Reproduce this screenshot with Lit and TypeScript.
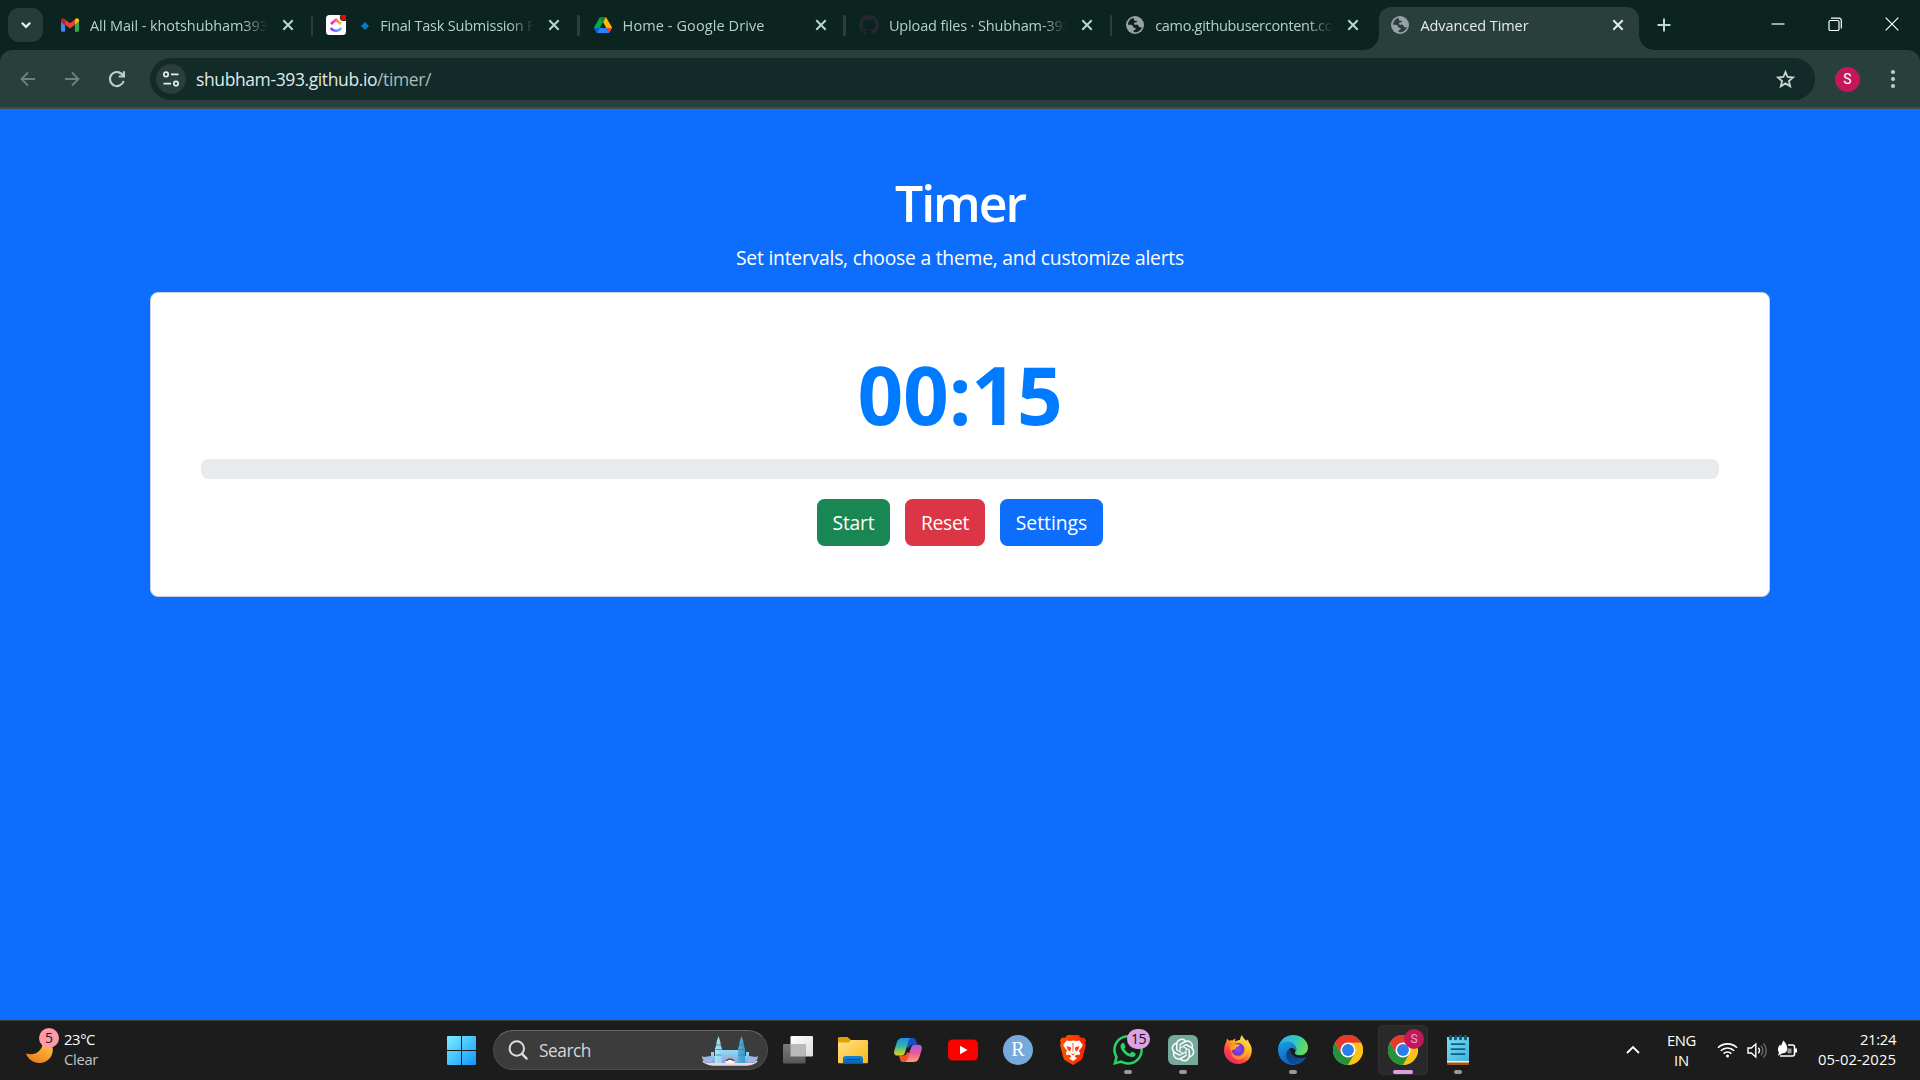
import { LitElement, html, svg, css, nothing, type TemplateResult } from "lit";
import { customElement, property } from "lit/decorators.js";

/** A line of text whose tracking is computed so that it fills a given width. */
@customElement("fit-text")
class FitText extends LitElement {
  @property({ type: Number }) width = 0;

  static styles = css`
    :host { display: inline-block; white-space: nowrap; }
  `;

  firstUpdated() {
    const count = [...(this.textContent ?? "").trim()].length;
    if (!this.width || !count) return;
    const natural = this.getBoundingClientRect().width;
    this.style.letterSpacing = `${((this.width - natural) / count).toFixed(4)}px`;
  }

  render() {
    return html`<slot></slot>`;
  }
}

const globe = svg`
  <svg class="icon18" viewBox="0 0 18 18">
    <circle cx="9" cy="9" r="9" fill="#9aa0a6"/>
    <path class="land" d="M7.6 1.9C4.4 2.5 2 5.4 2 8.7c1.6.1 3.6-.1 4.6.9.6.6.1 1.5 1.1 1.9 1.2.3 2.1.3 2.1 1.500 0 1.100-1.900.6-2.200 1.900l-.1 1.100c3.600.8 7.500-1.400 8.400-5.100-1.200.4-2.300.5-3-.2-.7-.6-.3-1.600-1.100-1.900-1.200-.4-2.800.4-3.600-.6-.5-.7-.1-1.500.600-1.800.8-.3 1.700.1 2.100-.5.4-.6-.3-1.100-.9-1.100-.9-.1-1.700-.1-2-.9-.2-.6-.4-1.400-.4-2z"/>
  </svg>`;

const gmail = svg`
  <svg class="icon18" viewBox="52 31 88 88">
    <path fill="#4285f4" d="M58 108h14V74L52 59v43c0 3.320 2.690 6 6 6"/>
    <path fill="#34a853" d="M120 108h14c3.320 0 6-2.690 6-6V59l-20 15"/>
    <path fill="#fbbc04" d="M120 48v26l20-15v-8c0-7.420-8.470-11.650-14.400-7.200"/>
    <path fill="#ea4335" d="M72 74V48l24 18 24-18v26L96 92"/>
    <path fill="#c5221f" d="M52 51v8l20 15V48l-5.600-4.200c-5.940-4.450-14.400-.22-14.400 7.200"/>
  </svg>`;

const clickup = svg`
  <svg class="icon20" viewBox="0 0 20 20">
    <defs>
      <linearGradient id="cu-top"><stop stop-color="#ff02f0"/><stop offset="1" stop-color="#ffc800"/></linearGradient>
      <linearGradient id="cu-low"><stop stop-color="#8930fd"/><stop offset="1" stop-color="#49ccf9"/></linearGradient>
    </defs>
    <rect width="20" height="20" rx="3.500" fill="#fff"/>
    <path d="M5 9l5-4.300L15 9" fill="none" stroke="url(#cu-top)" stroke-width="2.600"/>
    <path d="M4.800 13c2.900 3.700 7.600 3.700 10.400 0" fill="none" stroke="url(#cu-low)" stroke-width="2.600"/>
    <circle cx="17.500" cy="2.500" r="3.600" fill="#0b2420"/>
    <circle cx="17.500" cy="2.500" r="2.900" fill="#f00"/>
  </svg>`;

const drive = svg`
  <svg class="icon18" viewBox="0 -4.600 87.300 87.300">
    <path fill="#0066da" d="M6.600 66.850l3.850 6.650c.8 1.400 1.950 2.500 3.300 3.300l13.750-23.800H0c0 1.550.4 3.100 1.200 4.500z"/>
    <path fill="#00ac47" d="M43.650 25L29.900 1.200c-1.350.8-2.500 1.900-3.300 3.300l-25.400 44A9.060 9.060 0 0 0 0 53h27.500z"/>
    <path fill="#ea4335" d="M73.550 76.800c1.350-.8 2.500-1.900 3.300-3.300l1.600-2.750 7.650-13.250c.8-1.400 1.200-2.950 1.200-4.500H59.798l5.852 11.500z"/>
    <path fill="#188038" d="M43.650 25L57.400 1.200C56.050.4 54.500 0 52.900 0H34.400c-1.600 0-3.150.45-4.500 1.200z"/>
    <path fill="#2684fc" d="M59.800 53H27.500L13.750 76.800c1.350.8 2.900 1.200 4.500 1.200h50.800c1.600 0 3.150-.45 4.500-1.200z"/>
    <path fill="#ffba00" d="M73.400 26.500l-12.700-22c-.8-1.400-1.950-2.500-3.300-3.300L43.650 25 59.800 53h27.450c0-1.550-.4-3.100-1.200-4.500z"/>
  </svg>`;

const github = svg`
  <svg class="icon20" viewBox="0 0 16 16">
    <path fill="#24292f" d="M8 0C3.58 0 0 3.58 0 8c0 3.54 2.29 6.53 5.47 7.59.4.07.55-.17.55-.38 0-.19-.01-.82-.01-1.49-2.01.37-2.53-.49-2.69-.94-.09-.23-.48-.94-.82-1.13-.28-.15-.68-.52-.01-.53.63-.01 1.08.58 1.23.82.72 1.21 1.87.87 2.33.66.07-.52.28-.87.51-1.07-1.78-.2-3.64-.89-3.64-3.95 0-.87.31-1.59.82-2.15-.08-.2-.36-1.02.08-2.12 0 0 .67-.21 2.2.82.64-.18 1.32-.27 2-.27.68 0 1.36.09 2 .27 1.53-1.04 2.2-.82 2.2-.82.44 1.1.16 1.92.08 2.12.51.56.82 1.27.82 2.15 0 3.07-1.87 3.75-3.65 3.95.29.25.54.73.54 1.48 0 1.07-.01 1.93-.01 2.2 0 .21.15.46.55.38A8.012 8.012 0 0 0 16 8c0-4.42-3.58-8-8-8z"/>
  </svg>`;

const cross = svg`
  <svg class="cross" viewBox="0 0 12 12"><path d="M1.300 1.300l9.400 9.400M10.700 1.300l-9.400 9.400"/></svg>`;

const chromeLogo = svg`
  <svg class="icon30" viewBox="0 0 48 48">
    <circle cx="24" cy="24" r="24" fill="#fbc116"/>
    <path fill="#e33b2e" d="M24 24L3.200 12A24 24 0 0 1 44.800 12H24z"/>
    <path fill="#22933e" d="M3.200 12A24 24 0 0 0 24 48l10.400-18L24 24 13.600 30z"/>
    <path fill="#fbc116" d="M44.800 12A24 24 0 0 1 24 48l10.400-18A12 12 0 0 0 34.400 18L24 12z"/>
    <path fill="#e33b2e" d="M24 12h20.800A24 24 0 0 0 3.200 12l10.400 18L24 24z"/>
    <circle cx="24" cy="24" r="12" fill="#fff"/>
    <circle cx="24" cy="24" r="9.500" fill="#2b7de9"/>
  </svg>`;

const taskIcons = {
  view: svg`
    <svg class="icon30" viewBox="0 0 30 30">
      <defs>
        <linearGradient id="tv-b" x2="0" y2="1"><stop stop-color="#7b7b7b"/><stop offset="1" stop-color="#575757"/></linearGradient>
        <linearGradient id="tv-f" x2="1" y2="1"><stop stop-color="#fff"/><stop offset="1" stop-color="#dcdcdc"/></linearGradient>
      </defs>
      <rect x="7.500" y="1" width="22.500" height="20.500" rx="1.200" fill="url(#tv-f)"/>
      <rect x="0" y="9" width="22.500" height="19.500" rx="1.200" fill="url(#tv-b)"/>
      <rect x="7.500" y="9" width="15" height="12.500" fill="#b9b9b9"/>
    </svg>`,
  explorer: svg`
    <svg class="icon30" viewBox="0 0 30 30">
      <defs>
        <linearGradient id="ex-f" x2="1" y2="1"><stop stop-color="#ffe08a"/><stop offset="1" stop-color="#fbb917"/></linearGradient>
        <linearGradient id="ex-b" x2="0" y2="1"><stop stop-color="#1086d6"/><stop offset="1" stop-color="#0a62b0"/></linearGradient>
      </defs>
      <path fill="#e0a106" d="M0 3.500C0 2.600.7 2 1.500 2H9.500L13 5h15.500c.8 0 1.500.6 1.500 1.400V12H0z"/>
      <path fill="url(#ex-f)" d="M0 7.500h10.500L13 5h15.500c.8 0 1.500.6 1.500 1.500V27c0 .8-.5 1.300-1.300 1.300H1.300C.5 28.300 0 27.800 0 27z"/>
      <path fill="url(#ex-b)" d="M5 23.500C5 22 6 21 7.500 21h15c1.500 0 2.500 1 2.500 2.500v4.800H5z"/>
      <path d="M9 24.500h12" stroke="#084a88" stroke-width="1.200" stroke-linecap="round"/>
    </svg>`,
  copilot: svg`
    <svg class="icon30" viewBox="0 0 30 30">
      <defs>
        <linearGradient id="cp-a" x2="0" y2="1"><stop stop-color="#1c8fe8"/><stop offset=".45" stop-color="#2fb4b0"/><stop offset=".8" stop-color="#a5cc3c"/><stop offset="1" stop-color="#e8c52e"/></linearGradient>
        <linearGradient id="cp-b" x2="0" y2="1"><stop stop-color="#a25be6"/><stop offset=".5" stop-color="#e85a9e"/><stop offset="1" stop-color="#ffa06a"/></linearGradient>
      </defs>
      <path fill="#1750c8" d="M15.500 3h4.500c1.700 0 2.500 1 3 2.500l1.200 4.200h-4.500c-2 0-3 1-3.600 3L13 12z"/>
      <path fill="#e8562a" d="M14.500 27h-4.600c-1.700 0-2.400-1-2.900-2.500L6 20.500h4.300c2 0 3.100-1 3.700-3l3.200.5z"/>
      <path fill="url(#cp-a)" d="M9.500 3h8.800c-1.600.3-2.300 1.400-2.800 3l-3.500 11.500c-.6 2-1.600 3-3.600 3H4.500C1.700 20.500.5 18.500 1.300 15.500l2.500-8C4.800 4.500 6.500 3 9.500 3z"/>
      <path fill="url(#cp-b)" d="M20.500 27h-8.700c1.500-.3 2.300-1.400 2.700-3L18 12.700c.6-2 1.600-3 3.600-3h3.900c2.800 0 4 2 3.200 5l-2.500 7.800C25.200 25.500 23.500 27 20.500 27z"/>
    </svg>`,
  youtube: svg`
    <svg class="icon30" viewBox="0 0 30 30">
      <rect y="4.500" width="30" height="21" rx="4.500" fill="#f00"/>
      <path fill="#fff" d="M12 10.800v8.400l7.500-4.200z"/>
    </svg>`,
  r: svg`
    <svg class="icon30" viewBox="0 0 30 30">
      <circle cx="15" cy="15" r="15" fill="#75aadb"/>
      <text class="serif" x="15" y="20.500" text-anchor="middle" fill="#fff">R</text>
    </svg>`,
  brave: svg`
    <svg class="icon30" viewBox="0 0 30 30">
      <defs><linearGradient id="br"><stop stop-color="#ff5500"/><stop offset="1" stop-color="#ff2000"/></linearGradient></defs>
      <path fill="url(#br)" d="M9.500 0h11l2.700 2.900 2.600-.4L28 5.300l-.8 2.500.7 2.200-3.200 12.600c-.4 1.400-1 2.200-2.200 3L15 30l-7.500-4.400c-1.200-.8-1.800-1.600-2.200-3L2.100 10l.7-2.200L2 5.300l2.200-2.800 2.600.4z"/>
      <path fill="#fff" d="M15 5.500l3.300.6 3-.6 3.400 4.300-.5 1.700-3.300 4.200 1.200 2.300-.8 2.300-2.400-.9-2 1.500.1 1 2 1.300L15 26l-4-2.800 2-1.300.1-1-2-1.500-2.400.9-.8-2.300 1.200-2.300-3.300-4.200-.5-1.700 3.400-4.300 3 .6z"/>
      <path fill="#ff4010" d="M8.500 11.200l4 .8.700 1.500-1.200 3.200-2.200-2zM21.500 11.200l-4 .8-.7 1.500 1.200 3.200 2.200-2zM12.500 18l2.500 1 2.500-1-2.500 2.400zM14.500 8h1l-.2 9h-.6z"/>
    </svg>`,
  whatsapp: svg`
    <svg class="icon30" viewBox="0 0 24 24">
      <path fill="#25d366" d="M17.472 14.382c-.297-.149-1.758-.867-2.03-.967-.273-.099-.471-.148-.67.15-.197.297-.767.966-.94 1.164-.173.199-.347.223-.644.075-.297-.15-1.255-.463-2.39-1.475-.883-.788-1.48-1.761-1.653-2.059-.173-.297-.018-.458.13-.606.134-.133.298-.347.446-.52.149-.174.198-.298.298-.497.099-.198.05-.371-.025-.52-.075-.149-.669-1.612-.916-2.207-.242-.579-.487-.5-.669-.51-.173-.008-.371-.01-.57-.01-.198 0-.52.074-.792.372-.272.297-1.04 1.016-1.04 2.479 0 1.462 1.065 2.875 1.213 3.074.149.198 2.096 3.2 5.077 4.487.709.306 1.262.489 1.694.625.712.227 1.36.195 1.871.118.571-.085 1.758-.719 2.006-1.413.248-.694.248-1.289.173-1.413-.074-.124-.272-.198-.57-.347m-5.421 7.403h-.004a9.87 9.87 0 01-5.031-1.378l-.361-.214-3.741.982.998-3.648-.235-.374a9.86 9.86 0 01-1.51-5.26c.001-5.45 4.436-9.884 9.888-9.884 2.64 0 5.122 1.03 6.988 2.898a9.825 9.825 0 012.893 6.994c-.003 5.45-4.437 9.884-9.885 9.884m8.413-18.297A11.815 11.815 0 0012.05 0C5.495 0 .16 5.335.157 11.892c0 2.096.547 4.142 1.588 5.945L.057 24l6.305-1.654a11.882 11.882 0 005.683 1.448h.005c6.554 0 11.89-5.335 11.893-11.893a11.821 11.821 0 00-3.48-8.413z"/>
    </svg>`,
  gpt: svg`
    <svg class="icon30" viewBox="0 0 30 30">
      <path fill="#75a99c" d="M6 0h18a6 6 0 0 1 6 6v24H6a6 6 0 0 1-6-6V6a6 6 0 0 1 6-6z"/>
      <g transform="translate(3.500 3.500) scale(.958)"><path fill="#fff" d="M22.2819 9.8211a5.9847 5.9847 0 0 0-.5157-4.9108 6.0462 6.0462 0 0 0-6.5098-2.9A6.0651 6.0651 0 0 0 4.9807 4.1818a5.9847 5.9847 0 0 0-3.9977 2.9 6.0462 6.0462 0 0 0 .7427 7.0966 5.98 5.98 0 0 0 .511 4.9107 6.051 6.051 0 0 0 6.5146 2.9001A5.9847 5.9847 0 0 0 13.2599 24a6.0557 6.0557 0 0 0 5.7718-4.2058 5.9894 5.9894 0 0 0 3.9977-2.9001 6.0557 6.0557 0 0 0-.7475-7.0729zm-9.022 12.6081a4.4755 4.4755 0 0 1-2.8764-1.0408l.1419-.0804 4.7783-2.7582a.7948.7948 0 0 0 .3927-.6813v-6.7369l2.02 1.1686a.071.071 0 0 1 .038.052v5.5826a4.504 4.504 0 0 1-4.4945 4.4944zm-9.6607-4.1254a4.4708 4.4708 0 0 1-.5346-3.0137l.142.0852 4.783 2.7582a.7712.7712 0 0 0 .7806 0l5.8428-3.3685v2.3324a.0804.0804 0 0 1-.0332.0615L9.74 19.9502a4.4992 4.4992 0 0 1-6.1408-1.6464zM2.3408 7.8956a4.485 4.485 0 0 1 2.3655-1.9728V11.6a.7664.7664 0 0 0 .3879.6765l5.8144 3.3543-2.0201 1.1685a.0757.0757 0 0 1-.071 0l-4.8303-2.7865A4.504 4.504 0 0 1 2.3408 7.872zm16.5963 3.8558L13.1038 8.364 15.1192 7.2a.0757.0757 0 0 1 .071 0l4.8303 2.7913a4.4944 4.4944 0 0 1-.6765 8.1042v-5.6772a.79.79 0 0 0-.407-.667zm2.0107-3.0231l-.142-.0852-4.7735-2.7818a.7759.7759 0 0 0-.7854 0L9.409 9.2297V6.8974a.0662.0662 0 0 1 .0284-.0615l4.8303-2.7866a4.4992 4.4992 0 0 1 6.6802 4.66zM8.3065 12.863l-2.02-1.1638a.0804.0804 0 0 1-.038-.0567V6.0742a4.4992 4.4992 0 0 1 7.3757-3.4537l-.142.0805L8.704 5.459a.7948.7948 0 0 0-.3927.6813zm1.0976-2.3654l2.602-1.4998 2.6069 1.4998v2.9994l-2.5974 1.4997-2.6067-1.4997Z"/></g>
    </svg>`,
  firefox: svg`
    <svg class="icon30" viewBox="0 0 30 30">
      <defs>
        <linearGradient id="ff-a" x1=".85" y1=".05" x2=".15" y2="1"><stop stop-color="#fff44f"/><stop offset=".35" stop-color="#ffb028"/><stop offset=".65" stop-color="#ff4b3a"/><stop offset="1" stop-color="#e9107e"/></linearGradient>
        <radialGradient id="ff-p"><stop stop-color="#8a48ff"/><stop offset="1" stop-color="#6a36c8"/></radialGradient>
        <linearGradient id="ff-w" x2="1" y2=".4"><stop stop-color="#ff7a1a"/><stop offset="1" stop-color="#ffc22e"/></linearGradient>
      </defs>
      <path fill="url(#ff-a)" d="M19 0c.6 2.700 2.600 4.200 4.600 6.100l.6-1.600c1 .7 1.500 1.600 1.700 3 1.900 2.200 2.900 5 2.900 7.900C28.800 23 22.600 29 15 29S1 23 1 15.500c0-3.500 1-6.500 2.300-8.700L4 3.500l2.200 2.200C7.300 5 8.500 5 9.700 5.500c.7-.9 1.600-1.600 2.800-2-.5 1.100-.6 2-.4 3C14.500 5 16 5 17 5c.2-2 .9-3.700 2-5z"/>
      <circle cx="15" cy="14.300" r="6.300" fill="url(#ff-p)"/>
      <path fill="url(#ff-w)" d="M6 8.500c2-1.200 4-.8 5.500.5 1.700.3 3.300.1 5 .8.400.7-.7 1.500-2 2-1.800.6-2.100 1.300-2.300 2.700-1.600-.4-3.200.2-3.700 1.900-1.500-2.200-2.500-5-2.500-7.900z"/>
      <path fill="#ffc02c" d="M17 6c3.800.8 6 4 5.800 8-.1 4-3 7.300-7 7.300-3.700 0-6-2-7.300-4.800-.4 5.500 4 8.500 8 8 5.500-.6 8.500-5 8-10.200C24 10 21 6.600 17 6z" opacity=".55"/>
    </svg>`,
  edge: svg`
    <svg class="icon30" viewBox="0 0 30 30">
      <defs>
        <linearGradient id="ed-a" x1="0" y1=".3" x2="1" y2=".6"><stop stop-color="#2aaee6"/><stop offset=".5" stop-color="#34c6c3"/><stop offset="1" stop-color="#6ae04a"/></linearGradient>
        <linearGradient id="ed-b" x2=".3" y2="1"><stop stop-color="#1f9de0"/><stop offset="1" stop-color="#0b62c4"/></linearGradient>
        <linearGradient id="ed-c" x2="1" y2="1"><stop stop-color="#0a3a7c"/><stop offset="1" stop-color="#14569c"/></linearGradient>
      </defs>
      <path fill="url(#ed-a)" d="M.3 12.500C1.500 5.300 7.600 0 15 0c8.700 0 15 6 15 12.500 0 4.500-3.300 7.700-7.800 7.700-3.500 0-5.400-1.300-5.400-2.300 0-.9 1.500-1.300 1.500-3.600 0-2.800-2.800-4.800-6.800-4.800z"/>
      <path fill="url(#ed-b)" d="M0 15C0 9.300 4 6.600 8.800 6.600c5.400 0 9.500 3.200 9.500 7.700 0 .8-.2 1.500-.6 2.100-.5-2.200-2.500-3.600-4.700-3.600-3 1.400-3.500 5-2.500 8.500C11.500 26 15 29 18.500 29.500 17.500 29.900 16.200 30 15 30 6.700 30 0 23.300 0 15z"/>
      <path fill="url(#ed-c)" d="M12.400 13.200c-2.500 1.500-4.500 4-4.300 7.300.3 5 4.700 9.500 10 9.200 4.200-.9 7.600-3.400 9.700-6.900.3-.6-.2-.8-.6-.6-1.300.6-2.700.9-4.200.9-6.200 0-11-3.600-10.600-9.900z"/>
    </svg>`,
  chrome: chromeLogo,
  notepad: svg`
    <svg class="icon30" viewBox="0 0 30 30">
      <defs><linearGradient id="np" x2="1" y2="1"><stop stop-color="#7fdcf2"/><stop offset="1" stop-color="#3fb4dc"/></linearGradient></defs>
      <rect x="4" y="25" width="22" height="5" rx="1" fill="#a9530f"/>
      <rect x="4" y="22" width="22" height="5.500" fill="#f2f2f2"/>
      <rect x="4" y="2" width="22" height="24" fill="url(#np)"/>
      <path d="M8.500 9.200h13M8.500 14.200h13M8.500 19.200h13" stroke="#0c5f86" stroke-width="1.800" stroke-linecap="round"/>
      <path d="M7.500.8v3M12.500.8v3M17.500.8v3M22.500.8v3" stroke="#0d5674" stroke-width="3" stroke-linecap="round"/>
    </svg>`,
};

interface Tab { icon: TemplateResult; title: string; width: number; diamond?: boolean; active?: boolean; }

const tabs: Tab[] = [
  { icon: gmail, title: "All Mail - khotshubham393", width: 178 },
  { icon: clickup, title: "Final Task Submission F", width: 154, diamond: true },
  { icon: drive, title: "Home - Google Drive", width: 142 },
  { icon: github, title: "Upload files · Shubham-393", width: 182 },
  { icon: globe, title: "camo.githubusercontent.com", width: 191 },
  { icon: globe, title: "Advanced Timer", width: 108, active: true },
];

interface TaskItem { icon: TemplateResult; running?: boolean; active?: boolean; badge?: string; badgeClass?: string; }

const tasks: TaskItem[] = [
  { icon: taskIcons.view },
  { icon: taskIcons.explorer },
  { icon: taskIcons.copilot },
  { icon: taskIcons.youtube },
  { icon: taskIcons.r },
  { icon: taskIcons.brave },
  { icon: taskIcons.whatsapp, running: true, badge: "15", badgeClass: "count" },
  { icon: taskIcons.gpt, running: true },
  { icon: taskIcons.firefox },
  { icon: taskIcons.edge, running: true },
  { icon: taskIcons.chrome },
  { icon: taskIcons.chrome, active: true, badge: "S", badgeClass: "profile" },
  { icon: taskIcons.notepad, running: true },
];

@customElement("browser-chrome")
class BrowserChrome extends LitElement {
  static styles = css`
    :host { display: block; height: 109px; background: #0b2420; color: #b5cfc9; }
    svg { display: block; flex: none; }
    .icon18 { width: 18px; height: 18px; }
    .icon20 { width: 20px; height: 20px; }
    .land { fill: #0b2420; }
    .cross { width: 12px; height: 12px; fill: none; stroke: #b9d6cf; stroke-width: 2; }
    .strip { display: flex; height: 50px; box-sizing: border-box; }
    .search-tabs { display: flex; align-items: center; justify-content: center; width: 35px; height: 34px; margin: 8px 5px 0 8px; border-radius: 11px; background: #243d39; }
    .tab { position: relative; display: flex; align-items: center; width: 266.3px; height: 50px; box-sizing: border-box; }
    .tab::after { content: ""; width: 2.500px; height: 21px; margin-left: 16.8px; border-radius: 1px; background: #283f3b; }
    .tab.before-active::after { visibility: hidden; }
    .fav { display: flex; justify-content: center; width: 20px; margin: 0 10px 0 12px; }
    .title { display: flex; width: 178px; height: 24px; margin-right: 14px; padding-top: 1px; overflow: hidden; font-size: 14.500px; line-height: 24px; -webkit-mask-image: linear-gradient(90deg, #000 86%, transparent 100%); mask-image: linear-gradient(90deg, #000 86%, transparent 100%); }
    .diamond { width: 8px; height: 8px; margin: 8px 11px 0 5px; flex: none; }
    .active { width: 259.5px; height: 43px; margin-top: 7px; padding-bottom: 7px; border-radius: 12px 12px 0 0; background: #283f3b; color: #e4edeb; }
    .active .fav { margin-left: 11px; }
    .active::before { content: ""; position: absolute; left: -15px; bottom: 0; width: 15px; height: 15px; background: radial-gradient(circle at 0 0, transparent 14.500px, #283f3b 15px); }
    .active::after { position: absolute; right: -15px; bottom: 0; width: 15px; height: 15px; margin: 0; border-radius: 0; background: radial-gradient(circle at 100% 0, transparent 14.500px, #283f3b 15px); }
    .active .land { fill: #283f3b; }
    .active .cross { stroke: #e4edeb; }
    .plus { width: 14px; height: 14px; margin: 18px 0 0 18px; }
    .window { display: flex; gap: 43px; margin: 17px 21.500px 0 auto; }
    .window svg { width: 14px; height: 14px; fill: none; stroke: #fff; stroke-width: 1.200; }
    .bar { display: flex; align-items: center; height: 59px; box-sizing: border-box; padding: 1px 22.500px 0 18px; border-radius: 12px 12px 0 0; border-bottom: 2px solid #404b48; background: #283f3b; }
    .nav { width: 20px; height: 20px; margin-right: 24px; fill: none; stroke: #6d827d; stroke-width: 1.800; }
    .nav.live { margin: 0 23px 0 1px; stroke: #b5cfc9; stroke-width: 2.100; }
    .omni { display: flex; align-items: center; flex: 1; height: 42px; box-sizing: border-box; padding: 0 19px 0 6px; border-radius: 21px; background: #122b28; }
    .site { display: flex; align-items: center; justify-content: center; width: 30px; height: 30px; margin-right: 10px; border-radius: 50%; background: #283f3b; }
    .url { flex: 1; font-size: 17.500px; line-height: 30px; color: #dfe9e7; }
    .path { color: #a9bbb7; }
    .star { width: 21px; height: 21px; }
    .avatar { width: 25px; height: 25px; margin: 0 29.500px 0 20px; border-radius: 50%; background: #c2185b; color: #fff; font: 14px/25px Roboto, sans-serif; text-align: center; }
    .dots { width: 6px; height: 20px; margin-right: 2px; }
  `;

  private tab(t: Tab, i: number) {
    const state = t.active ? "active" : tabs[i + 1]?.active ? "before-active" : "";
    return html`
      <div class="tab ${state}">
        <span class="fav">${t.icon}</span>
        <span class="title">
          ${t.diamond ? svg`<svg class="diamond" viewBox="0 0 8 8"><path fill="#0a79c8" d="M4 0l4 4-4 4-4-4z"/></svg>` : nothing}
          <fit-text width=${t.width}>${t.title}</fit-text>
        </span>
        ${cross}
      </div>`;
  }

  render() {
    return html`
      <div class="strip">
        <div class="search-tabs">
          <svg width="12" height="12" viewBox="0 0 12 12"><path d="M1.800 3.700L6 7.900l4.200-4.200" fill="none" stroke="#e8f2f0" stroke-width="2.200"/></svg>
        </div>
        ${tabs.map((t, i) => this.tab(t, i))}
        <svg class="plus" viewBox="0 0 14 14"><path d="M7 .5v13M.5 7h13" stroke="#b9d6cf" stroke-width="2"/></svg>
        <div class="window">
          <svg viewBox="0 0 14 14"><path d="M.5 7h13"/></svg>
          <svg viewBox="0 0 14 14"><rect x="1" y="3.500" width="10" height="10" rx="1.500"/><path d="M3 1.200h8.200a2.100 2.100 0 0 1 2.100 2.100V11.500"/></svg>
          <svg viewBox="0 0 14 14"><path d="M.7.7l12.600 12.600M13.300.7L.7 13.300"/></svg>
        </div>
      </div>
      <div class="bar">
        <svg class="nav" viewBox="0 0 20 20"><path d="M17 10H3.800M10 3.500L3.500 10l6.500 6.500"/></svg>
        <svg class="nav" viewBox="0 0 20 20"><path d="M3 10h13.200M10 3.500l6.500 6.500-6.500 6.500"/></svg>
        <svg class="nav live" viewBox="0 0 20 20"><path d="M16 6.500A7 7 0 1 0 16.700 12M17 2.300v5.200h-5.300"/></svg>
        <div class="omni">
          <span class="site">
            <svg width="16" height="16" viewBox="0 0 16 16" fill="none" stroke="#e4efed" stroke-width="1.700">
              <circle cx="3" cy="3.400" r="2.200"/><path d="M8 3.400h7.500M.5 12.600H8"/><circle cx="13" cy="12.600" r="2.200"/>
            </svg>
          </span>
          <span class="url"><fit-text width="235">shubham-393.github.io<span class="path">/timer/</span></fit-text></span>
          <svg class="star" viewBox="0 0 21 21"><path d="M10.500 3l2.100 5 5.400.5-4.100 3.500 1.300 5.300-4.700-2.900-4.700 2.900L7.100 12 3 8.500l5.400-.5z" fill="none" stroke="#c9d4d2" stroke-width="1.800"/></svg>
        </div>
        <span class="avatar">S</span>
        <svg class="dots" viewBox="0 0 6 20" fill="#b5cfc9"><circle cx="3" cy="3" r="2.100"/><circle cx="3" cy="10" r="2.100"/><circle cx="3" cy="17" r="2.100"/></svg>
      </div>`;
  }
}

@customElement("timer-page")
class TimerPage extends LitElement {
  static styles = css`
    :host { display: flex; flex-direction: column; align-items: center; flex: 1; box-sizing: border-box; padding: 64px 150px 0; background: #0d6efd; color: #fff; }
    h1 { margin: 0 0 10px; font-size: 50px; line-height: 60px; font-weight: 600; }
    .lead { margin: 0 0 19px; font-size: 19.300px; line-height: 30px; }
    .card { display: flex; flex-direction: column; align-items: center; width: 100%; height: 305px; box-sizing: border-box; padding: 53px 50px 0; border: 1px solid #cbd0d8; border-radius: 8px; background: #fff; }
    .time { margin-bottom: 17px; font-size: 80px; line-height: 96px; font-weight: 700; color: #007bff; }
    .progress { width: 100%; height: 20px; margin-bottom: 20px; border-radius: 7.500px; background: #e7ebee; }
    .actions { display: flex; gap: 15px; }
    .btn { display: flex; align-items: center; justify-content: center; height: 47px; box-sizing: border-box; padding: 0; border: 0; border-radius: 7.500px; color: #fff; font-family: inherit; font-size: 19.300px; line-height: 30px; }
    .start { width: 73px; background: #198754; }
    .reset { width: 80px; background: #dc3545; }
    .settings { width: 103px; background: #0d6efd; }
  `;

  render() {
    return html`
      <h1><fit-text width="130">Timer</fit-text></h1>
      <p class="lead"><fit-text width="448">Set intervals, choose a theme, and customize alerts</fit-text></p>
      <section class="card">
        <div class="time"><fit-text width="205">00:15</fit-text></div>
        <div class="progress"></div>
        <div class="actions">
          <button class="btn start"><fit-text width="42">Start</fit-text></button>
          <button class="btn reset"><fit-text width="48">Reset</fit-text></button>
          <button class="btn settings"><fit-text width="71.5">Settings</fit-text></button>
        </div>
      </section>`;
  }
}

@customElement("task-bar")
class TaskBar extends LitElement {
  static styles = css`
    :host { display: grid; grid-template-columns: 447px auto 1fr; height: 60px; box-sizing: border-box; border-top: 1px solid #3a3a3a; background: #1c1c1c; color: #fff; font-size: 14.800px; line-height: 20px; }
    svg { display: block; flex: none; }
    .icon30 { width: 30px; height: 30px; }
    .serif { font: 20px "Liberation Serif", serif; }
    .weather { display: flex; padding: 8px 0 0 26px; }
    .moon { position: relative; width: 26px; height: 40px; margin-right: 12px; }
    .moon svg { padding-top: 13px; }
    .alerts { position: absolute; left: 13px; top: -1px; width: 20px; height: 20px; border-radius: 50%; background: #ff99a4; color: #1c1c1c; text-align: center; font-size: 14px; }
    .muted { color: #c4c4c4; }
    .lines { display: flex; flex-direction: column; }
    .apps { display: flex; align-items: flex-start; }
    .win { width: 29px; height: 29px; margin: 15px 17px 0 0; }
    .search { display: flex; align-items: center; width: 275px; height: 40px; box-sizing: border-box; margin: 9px 5px 0 0; padding: 0 8px 0 14px; border: 1px solid #4c4c4c; border-top-color: #686868; border-radius: 20px; background: #3c3c3c; color: #d6d6d6; font-size: 17.300px; }
    .search fit-text { margin: 2px auto 0 11px; }
    .cell { position: relative; display: flex; justify-content: center; width: 50px; height: 50px; margin: 4px 5px 0 0; box-sizing: border-box; padding-top: 10px; border-radius: 5px; }
    .cell.running::after { content: ""; position: absolute; left: 21px; bottom: 1px; width: 8px; height: 4px; border-radius: 2px; background: #9a9a9a; }
    .cell.active { background: #292929; box-shadow: inset 0 0 0 1px #303030; }
    .cell.active::after { content: ""; position: absolute; left: 15px; bottom: 1px; width: 20px; height: 4px; border-radius: 2px; background: #d9a0e2; }
    .badge { position: absolute; box-sizing: border-box; height: 20px; border-radius: 10px; text-align: center; line-height: 20px; }
    .count { left: 24px; top: 4px; width: 23px; background: #dba3e6; color: #111; font-size: 14px; letter-spacing: -.6px; }
    .profile { left: 26px; top: 4px; width: 20px; background: #c2185b; color: #e9a9c2; font: 12px/20px Roboto, sans-serif; }
    .tray { display: flex; justify-content: flex-end; padding: 9px 24px 0 0; }
    .up { width: 14px; height: 14px; margin: 13px 27px 0 0; }
    .lang { align-items: center; margin-right: 21px; }
    .status { display: flex; gap: 9px; margin: 10px 20px 0 0; }
    .clock { align-items: flex-end; margin-top: -1px; }
  `;

  render() {
    return html`
      <div class="weather">
        <div class="moon">
          <svg width="27" height="34" viewBox="0 0 27 21" preserveAspectRatio="xMidYMin meet">
            <defs><linearGradient id="moon" x1="1" x2=".3" y2="1"><stop stop-color="#ffc94a"/><stop offset="1" stop-color="#ef7d1a"/></linearGradient></defs>
            <path fill="url(#moon)" d="M0 11.500c5 1.800 11 .5 14-3.500C16.500 4.800 17 2 16.500 0 23 0 27 3 26.800 8 26.500 15.500 21 21 13.500 21 7 21 2 17 0 11.500z"/>
          </svg>
          <span class="alerts">5</span>
        </div>
        <div class="lines"><fit-text width="31">23°C</fit-text><fit-text class="muted" width="34">Clear</fit-text></div>
      </div>
      <div class="apps">
        <svg class="win" viewBox="0 0 29 29">
          <defs><linearGradient id="win" x2="1" y2="1"><stop stop-color="#7cecff"/><stop offset=".5" stop-color="#46c3fb"/><stop offset="1" stop-color="#1294ff"/></linearGradient></defs>
          <path fill="url(#win)" d="M1 0h13v14H0V1a1 1 0 0 1 1-1zM15 0h13a1 1 0 0 1 1 1v13H15zM0 15h14v14H1a1 1 0 0 1-1-1zM15 15h14v13a1 1 0 0 1-1 1H15z"/>
        </svg>
        <div class="search">
          <svg width="20" height="20" viewBox="0 0 20 20" fill="none" stroke="#dedede" stroke-width="2"><circle cx="8.800" cy="8.500" r="7.200"/><path d="M14 13.800l4.500 4.700" stroke-width="2.500" stroke-linecap="round"/></svg>
          <fit-text width="52">Search</fit-text>
          <svg width="58" height="31" viewBox="0 0 58 31">
            <defs>
              <linearGradient id="cs-a" x2="1"><stop stop-color="#a5e6f5"/><stop offset="1" stop-color="#3f9cc8"/></linearGradient>
              <linearGradient id="cs-b" x2="0" y2="1"><stop stop-color="#8fdcf3"/><stop offset="1" stop-color="#86a4dc"/></linearGradient>
            </defs>
            <path fill="#e9d7e2" d="M1 26h56c-3 3.500-8 4.700-13 4.700H14C9 30.700 4 29.500 1 26z"/>
            <path fill="url(#cs-b)" d="M1 21l2 1 7-1V17h3v4l3-1v8H5c-2-1-4-4-4-7zM57 21l-2 1-7-1V17h-3v4l-3-1v8h11c2-1 4-4 4-7z"/>
            <path fill="url(#cs-b)" d="M18 15h22v13h-6c0-6-10-6-10 0h-6z"/>
            <path fill="#c4a8d8" d="M3 24h8v3H5zM47 24h8l-2 3h-6zM22 20h14v1.500H22z"/>
            <path fill="url(#cs-a)" d="M17.500 1l1.700 5 .6 4 1.200 4v14h-7V14l1.200-4 .6-4zM40.500 1l1.700 5 .6 4 1.200 4v14h-7V14l1.200-4 .6-4z"/>
            <path stroke="#367fa8" stroke-width=".8" d="M15 10h5M14.500 14.500h6M14.500 20h6M38 10h5M37.500 14.500h6M37.500 20h6"/>
            <path fill="#fff0e0" d="M25 28.500c0-5 8-5 8 0z"/>
          </svg>
        </div>
        ${tasks.map((t) => html`
          <div class="cell ${t.running ? "running" : ""} ${t.active ? "active" : ""}">
            ${t.icon}
            ${t.badge ? html`<span class="badge ${t.badgeClass ?? ""}">${t.badge}</span>` : nothing}
          </div>`)}
      </div>
      <div class="tray">
        <svg class="up" viewBox="0 0 14 14"><path d="M1 10l6-6 6 6" fill="none" stroke="#fff" stroke-width="1.800"/></svg>
        <div class="lines lang"><fit-text width="29">ENG</fit-text><fit-text width="15">IN</fit-text></div>
        <div class="status">
          <svg width="21" height="20" viewBox="0 0 21 20" fill="none" stroke="#fff" stroke-width="1.600">
            <path d="M1 7.800a13.400 13.400 0 0 1 19 0M3.800 10.800a9.500 9.500 0 0 1 13.400 0M6.600 13.600a5.500 5.500 0 0 1 7.800 0"/><circle cx="10.500" cy="16" r="1.500" fill="#fff" stroke="none"/>
          </svg>
          <svg width="21" height="20" viewBox="0 0 21 20" fill="none" stroke="#fff" stroke-width="1.400">
            <path d="M1 8h3.300l4.500-4v13l-4.500-4H1z"/><path d="M11.300 7.800a4 4 0 0 1 0 5.400"/><path stroke="#6b6b6b" d="M14 5.800a7 7 0 0 1 0 9.400M16.500 3.500a10.200 10.200 0 0 1 0 14"/>
          </svg>
          <svg width="21" height="20" viewBox="0 0 21 20" fill="none" stroke="#fff" stroke-width="1.500">
            <path d="M11 5h4.500a2 2 0 0 1 2 2v7a2 2 0 0 1-2 2H3"/><path d="M18 8.500h2v4h-2z" fill="#fff" stroke="none"/>
            <path d="M6.200.5C8.500 2.500 10.500 5.500 10.200 9 10 12 8 13.300 5.500 13.200L1 15.800 2 12.500C0 10 1 7 3 4.500l1 1.500z" fill="#fff" stroke="none"/><path d="M10.500 13.300V8.500h4v4.800z" fill="#fff" stroke="none" opacity=".55"/>
          </svg>
        </div>
        <div class="lines clock"><fit-text width="36">21:24</fit-text><fit-text width="78">05-02-2025</fit-text></div>
      </div>`;
  }
}

@customElement("app-root")
class AppRoot extends LitElement {
  static styles = css`
    :host { display: flex; flex-direction: column; width: 1920px; height: 1080px; overflow: hidden; font-family: "Open Sans", "Noto Sans", sans-serif; }
  `;

  render() {
    return html`<browser-chrome></browser-chrome><timer-page></timer-page><task-bar></task-bar>`;
  }
}
